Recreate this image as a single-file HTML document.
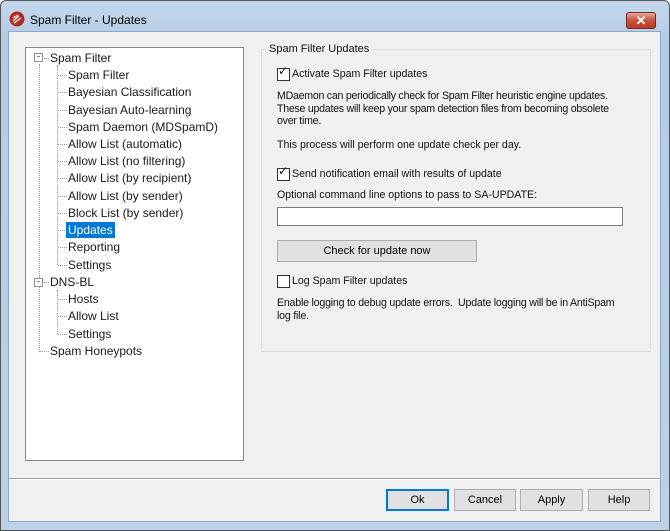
<!DOCTYPE html>
<html><head><style>
*{margin:0;padding:0;box-sizing:border-box}
body{width:670px;height:531px;overflow:hidden;background:#fff;font-family:"Liberation Sans",sans-serif;position:relative}
.win{position:absolute;left:0;top:0;width:670px;height:531px;border:1px solid #555;border-radius:6px 6px 0 0;background:linear-gradient(#c4d7ec,#b4cbe6 40px,#bcd2ea);}
.client{position:absolute;left:8px;top:31px;width:653px;height:491px;background:#f0f0f0;border:1px solid #8ea7c4}
.title{position:absolute;left:30px;top:13px;font-size:12px;color:#000}
.abs{position:absolute}
.tree{position:absolute;left:25px;top:47px;width:219px;height:414px;background:#fff;border:1px solid #828790}
.t{position:absolute;font-size:12px;color:#1a1a1a;white-space:nowrap}
.h{position:absolute;width:9px;border-top:1px dotted #999}
.r{position:absolute;font-size:10.6px;color:#111;white-space:nowrap;font-family:"Liberation Sans",sans-serif}
.cb{position:absolute;width:13px;height:13px;border:1px solid #333;background:#fff}
.btn{position:absolute;top:489px;height:22px;border:1px solid #adadad;background:#e1e1e1;font-size:11px;text-align:center;line-height:20px}
</style></head><body>
<div class="win"></div>
<svg class="abs" style="left:9px;top:11px" width="16" height="16" viewBox="0 0 16 16"><circle cx="8" cy="8" r="7.5" fill="#b52a1e"/><path d="M4 10l6-5M5 12l7-5M4 7l5-3" stroke="#fff" stroke-width="1.2" fill="none"/></svg>
<div class="title">Spam Filter - Updates</div>
<div class="abs" style="left:626px;top:12px;width:30px;height:17px;border:1px solid #6b2a25;border-radius:3px;background:linear-gradient(#e7a493,#c8533d 50%,#b83a24);color:#fff;font-size:13px;font-weight:bold;text-align:center;line-height:15px">✕</div>
<div class="client"></div>
<div class="tree"></div>
<div class="abs" style="left:39px;top:64px;height:288px;border-left:1px dotted #999"></div>
<div class="abs" style="left:57px;top:65px;height:200px;border-left:1px dotted #999"></div>
<div class="abs" style="left:57px;top:290px;height:44px;border-left:1px dotted #999"></div>
<div class="h" style="left:58px;top:75px"></div>
<div class="h" style="left:58px;top:92px"></div>
<div class="h" style="left:58px;top:110px"></div>
<div class="h" style="left:58px;top:127px"></div>
<div class="h" style="left:58px;top:144px"></div>
<div class="h" style="left:58px;top:161px"></div>
<div class="h" style="left:58px;top:178px"></div>
<div class="h" style="left:58px;top:196px"></div>
<div class="h" style="left:58px;top:213px"></div>
<div class="h" style="left:58px;top:230px"></div>
<div class="h" style="left:58px;top:247px"></div>
<div class="h" style="left:58px;top:265px"></div>
<div class="h" style="left:58px;top:299px"></div>
<div class="h" style="left:58px;top:316px"></div>
<div class="h" style="left:58px;top:334px"></div>
<div class="h" style="left:40px;top:351px"></div>
<div class="h" style="left:44px;top:58px;width:5px"></div>
<div class="h" style="left:44px;top:282px;width:5px"></div>
<div class="abs" style="left:34px;top:53px;width:9px;height:9px;border:1px solid #919191;background:#fff;font-size:9px;line-height:5px;text-align:center">-</div>
<div class="abs" style="left:34px;top:278px;width:9px;height:9px;border:1px solid #919191;background:#fff;font-size:9px;line-height:5px;text-align:center">-</div>
<div class="t" style="left:50px;top:51px">Spam Filter</div>
<div class="t" style="left:68px;top:68px">Spam Filter</div>
<div class="t" style="left:68px;top:85px">Bayesian Classification</div>
<div class="t" style="left:68px;top:103px">Bayesian Auto-learning</div>
<div class="t" style="left:68px;top:120px">Spam Daemon (MDSpamD)</div>
<div class="t" style="left:68px;top:137px">Allow List (automatic)</div>
<div class="t" style="left:68px;top:154px">Allow List (no filtering)</div>
<div class="t" style="left:68px;top:171px">Allow List (by recipient)</div>
<div class="t" style="left:68px;top:189px">Allow List (by sender)</div>
<div class="t" style="left:68px;top:206px">Block List (by sender)</div>
<div class="t" style="left:66px;top:222px;background:#0078d7;color:#fff;padding:1px 2px">Updates</div>
<div class="t" style="left:68px;top:240px">Reporting</div>
<div class="t" style="left:68px;top:258px">Settings</div>
<div class="t" style="left:50px;top:275px">DNS-BL</div>
<div class="t" style="left:68px;top:292px">Hosts</div>
<div class="t" style="left:68px;top:309px">Allow List</div>
<div class="t" style="left:68px;top:327px">Settings</div>
<div class="t" style="left:50px;top:344px">Spam Honeypots</div>
<div class="abs" style="left:261px;top:49px;width:390px;height:303px;border:1px solid #dcdcdc"></div>
<div class="r" style="left:266px;top:43px;background:#f0f0f0;padding:0 3px;font-size:11px">Spam Filter Updates</div>
<div class="cb" style="left:277px;top:68px"></div><div class="r" style="left:278px;top:64px;font-size:12px">✓</div>
<div class="r" style="left:292px;top:68px">Activate Spam Filter updates</div>
<div class="r" style="left:277px;top:90px;line-height:12.5px;letter-spacing:-0.25px">MDaemon can periodically check for Spam Filter heuristic engine updates.<br>These updates will keep your spam detection files from becoming obsolete<br>over time.</div>
<div class="r" style="left:277px;top:139px">This process will perform one update check per day.</div>
<div class="cb" style="left:277px;top:168px"></div><div class="r" style="left:278px;top:164px;font-size:12px">✓</div>
<div class="r" style="left:292px;top:168px">Send notification email with results of update</div>
<div class="r" style="left:277px;top:189px">Optional command line options to pass to SA-UPDATE:</div>
<div class="abs" style="left:277px;top:207px;width:346px;height:19px;border:1px solid #7a7a7a;background:#fff"></div>
<div class="btn" style="left:277px;top:240px;width:200px">Check for update now</div>
<div class="cb" style="left:277px;top:275px"></div>
<div class="r" style="left:292px;top:275px">Log Spam Filter updates</div>
<div class="r" style="left:277px;top:297px;line-height:12.5px;letter-spacing:-0.2px">Enable logging to debug update errors.&nbsp; Update logging will be in AntiSpam<br>log file.</div>
<div class="abs" style="left:9px;top:478px;width:651px;border-top:1px solid #a0a0a0;border-bottom:1px solid #fff"></div>
<div class="btn" style="left:386px;width:63px;border:2px solid #0078d7;line-height:18px">Ok</div>
<div class="btn" style="left:454px;width:62px">Cancel</div>
<div class="btn" style="left:520px;width:63px">Apply</div>
<div class="btn" style="left:588px;width:62px">Help</div>
</body></html>
